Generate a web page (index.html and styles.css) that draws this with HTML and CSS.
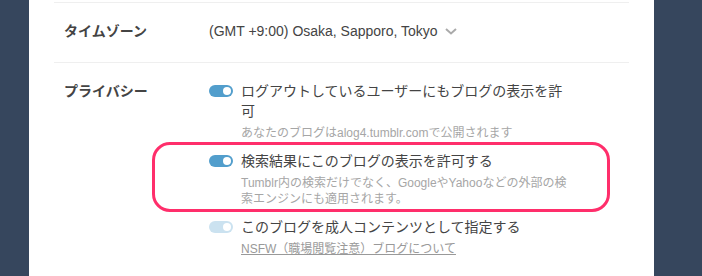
FILE: index.html
```html
<!DOCTYPE html>
<html lang="ja">
<head>
  <meta charset="UTF-8">
  <title>ブログ設定</title>
  <link rel="stylesheet" href="styles.css">
</head>
<body>
  <div class="page">
    <div class="side-left"></div>
    <div class="panel">
      <div class="row">
        <div class="label">タイムゾーン</div>
        <div class="value">
          <span class="select">(GMT +9:00) Osaka, Sapporo, Tokyo
            <svg class="chevron" width="12" height="7" viewBox="0 0 12 7"><path d="M1 1 L6 5.5 L11 1" fill="none" stroke="#aaa" stroke-width="2"/></svg>
          </span>
        </div>
      </div>
      <div class="row">
        <div class="label">プライバシー</div>
        <div class="value">
          <div class="item">
            <span class="toggle on"></span>
            <div class="item-text">
              <div class="main">ログアウトしているユーザーにもブログの表示を許可</div>
              <div class="hint">あなたのブログはalog4.tumblr.comで公開されます</div>
            </div>
          </div>
          <div class="item marked">
            <span class="toggle on"></span>
            <div class="item-text">
              <div class="main">検索結果にこのブログの表示を許可する</div>
              <div class="hint">Tumblr内の検索だけでなく、GoogleやYahooなどの外部の検索エンジンにも適用されます。</div>
            </div>
            <div class="highlight"></div>
          </div>
          <div class="item">
            <span class="toggle on disabled"></span>
            <div class="item-text">
              <div class="main">このブログを成人コンテンツとして指定する</div>
              <a href="#" class="hint link">NSFW（職場閲覧注意）ブログについて</a>
            </div>
          </div>
        </div>
      </div>
    </div>
    <div class="side-right"></div>
  </div>
</body>
</html>
```

FILE: styles.css
```css
body{
  margin: 0;
  background: #36465d;
  font-family: "Liberation Sans", "Noto Sans CJK JP", sans-serif;
  color: #444;
}
.page{
  display: flex;
  height: 276px;
  overflow: hidden;
}
.side-left{
  width: 29px;
  flex-shrink: 0;
}
.side-right{
  flex: 1;
}
.panel{
  width: 625px;
  background: #fff;
  padding: 2px 25px 0;
  box-sizing: border-box;
}
.row{
  display: grid;
  grid-template-columns: 155px 1fr;
  border-top: 1px solid #efefef;
  padding: 18px 0 21px;
}
.label{
  padding-left: 10px;
  font-size: 14px;
  font-weight: bold;
  line-height: 20px;
  color: #444;
}
.value{
  font-size: 14px;
  line-height: 20px;
}
.select{
  display: inline-flex;
  align-items: center;
  gap: 7px;
}
.chevron{
  margin-top: 1px;
}
.item{
  display: flex;
  align-items: flex-start;
  gap: 8px;
  margin-bottom: 10px;
}
.item-text{
  width: 330px;
}
.main{
  font-size: 14px;
  line-height: 20px;
  color: #444;
}
.hint{
  display: block;
  margin-top: 4px;
  font-size: 12px;
  line-height: 16px;
  color: #a6a6a6;
}
.link{
  display: inline-block;
  color: #999;
  text-decoration: underline;
}
.toggle{
  flex-shrink: 0;
  width: 24px;
  height: 12px;
  margin-top: 4px;
  border-radius: 6px;
  background: #529ecc;
  position: relative;
}
.toggle::after{
  content: "";
  position: absolute;
  top: 2px;
  right: 2px;
  width: 8px;
  height: 8px;
  border-radius: 50%;
  background: #fff;
}
.toggle.disabled{
  background: #cbe2f0;
}
.marked{
  position: relative;
}
.highlight{
  position: absolute;
  top: -9px;
  bottom: -5px;
  left: -57px;
  right: 19px;
  border: 3px solid #ff2e6b;
  border-radius: 18px;
  pointer-events: none;
}
```
